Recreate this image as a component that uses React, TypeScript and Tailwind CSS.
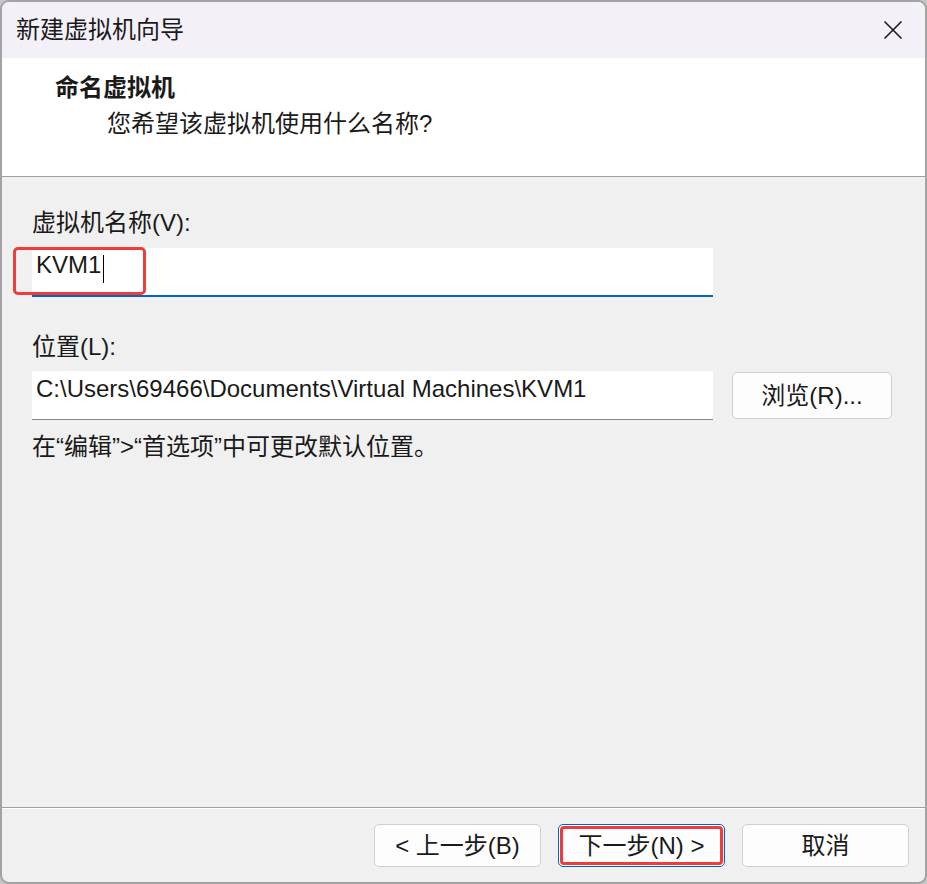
const FONT = "font-['Liberation_Sans','Noto_Sans_CJK_SC',sans-serif]";

const WizardButton = ({ label, focused }: { label: string; focused?: boolean }) => (
    <button
        className={
            focused
                ? 'relative h-[43px] w-[167px] rounded-[5px] border border-[#0067c0] bg-[#fdfdfd] text-[24px] leading-[32px] text-[#1a1a1a]'
                : 'h-[43px] w-[167px] rounded-[5px] border border-[#d0d0d0] bg-[#fdfdfd] text-[24px] leading-[32px] text-[#1a1a1a]'
        }
    >
        {label}
        {/* red highlight drawn over the focused button */}
        {focused && (
            <span className="pointer-events-none absolute inset-[1px] rounded-[4px] border-[3px] border-[#f23c3c]" />
        )}
    </button>
);

const CloseIcon = () => (
    <svg className="h-[20px] w-[20px]" viewBox="0 0 20 20" fill="none" stroke="#1a1a1a" strokeWidth={1.6}>
        <path d="M1.5 1.5 L18.5 18.5 M18.5 1.5 L1.5 18.5" />
    </svg>
);

export default function App() {
    return (
        <div className={`h-[884px] w-[927px] bg-[#c6c6c6] ${FONT}`}>
            <div className="flex h-full w-full flex-col overflow-hidden rounded-[9px] border-2 border-[#a3a3a3] bg-[#f0f0f0] text-[#1a1a1a]">
                {/* Title bar */}
                <div className="flex h-[56px] shrink-0 items-center justify-between bg-[#f3f1f7] pl-[14px] pr-[22px]">
                    <span className="text-[24px] leading-[32px]">新建虚拟机向导</span>
                    <CloseIcon />
                </div>

                {/* Header */}
                <div className="h-[119px] shrink-0 border-b border-[#a0a0a0] bg-white pl-[53px] pt-[14px]">
                    <div className="text-[24px] font-bold leading-[32px]">命名虚拟机</div>
                    <div className="mt-[4px] pl-[52px] text-[24px] leading-[32px]">您希望该虚拟机使用什么名称?</div>
                </div>

                {/* Body */}
                <div className="flex-1 px-[30px] pt-[30px]">
                    <div className="text-[24px] leading-[32px]">虚拟机名称(V):</div>
                    <div className="relative mt-[9px] h-[49px] w-[681px] border-b-2 border-[#0067c0] bg-white pl-[4px] pt-[1px]">
                        <span className="text-[24px] leading-[32px]">KVM1</span>
                        <span className="ml-[2px] inline-block h-[28px] w-px bg-black align-middle" />
                        <div className="pointer-events-none absolute left-[-19px] top-[-1px] h-[48px] w-[133px] rounded-[5px] border-[3px] border-[#f23c3c]" />
                    </div>

                    <div className="mt-[34px] text-[24px] leading-[32px]">位置(L):</div>
                    <div className="mt-[8px] flex items-start gap-[19px]">
                        <div className="h-[49px] w-[681px] border-b border-[#868686] bg-white pl-[4px] pt-[2px] text-[24px] leading-[32px]">
                            C:\Users\69466\Documents\Virtual Machines\KVM1
                        </div>
                        <button className="mt-[1px] h-[47px] w-[160px] rounded-[5px] border border-[#d0d0d0] bg-[#fdfdfd] text-[24px] leading-[32px]">
                            浏览(R)...
                        </button>
                    </div>

                    <div className="mt-[11px] text-[24px] leading-[32px]">在“编辑”&gt;“首选项”中可更改默认位置。</div>
                </div>

                {/* Footer */}
                <div className="shrink-0">
                    <div className="h-px bg-[#a0a0a0]" />
                    <div className="h-px bg-white" />
                    <div className="flex justify-end gap-[17px] pb-[15px] pr-[16px] pt-[15px]">
                        <WizardButton label="< 上一步(B)" />
                        <WizardButton label="下一步(N) >" focused />
                        <WizardButton label="取消" />
                    </div>
                </div>
            </div>
        </div>
    );
}
